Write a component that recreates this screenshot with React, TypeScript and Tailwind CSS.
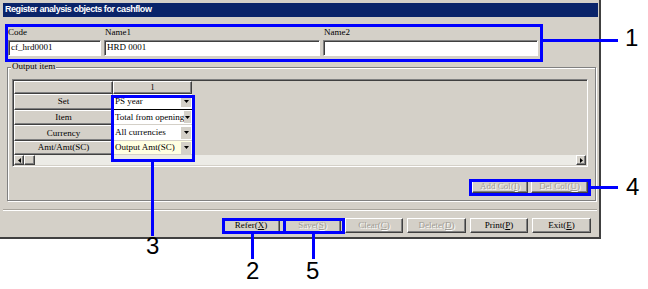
import React from 'react';

const raised =
  'border border-t-white border-l-white border-r-[#404040] border-b-[#404040] shadow-[inset_-1px_-1px_#808080]';
const sunken =
  'border border-t-[#808080] border-l-[#808080] border-r-white border-b-white shadow-[inset_1px_1px_#404040]';
const serif = "font-['Liberation_Serif','Times_New_Roman',serif]";

function Mnemonic({ label, keyChar }: { label: string; keyChar: string }) {
  return (
    <>
      {label}(<span className="underline">{keyChar}</span>)
    </>
  );
}

function WinButton({
  label,
  keyChar,
  disabled,
  className = '',
}: {
  label: string;
  keyChar: string;
  disabled?: boolean;
  className?: string;
}) {
  return (
    <div
      className={`${raised} ${serif} flex items-center justify-center bg-[#d4d0c8] text-[9px] leading-none ${
        disabled ? 'text-[#a09c94] [text-shadow:1px_1px_#ffffff]' : 'text-black'
      } ${className}`}
    >
      <Mnemonic label={label} keyChar={keyChar} />
    </div>
  );
}

function DropArrow() {
  return (
    <div className="flex h-[12px] w-[10px] items-center justify-center bg-[#d4d0c8]">
      <svg width="5" height="3" viewBox="0 0 5 3">
        <path d="M0 0h5L2.5 3z" fill="#000" />
      </svg>
    </div>
  );
}

const rows = [
  { label: 'Set', value: 'PS year', bg: 'bg-white', h: 'h-[16px]', focus: true },
  { label: 'Item', value: 'Total from opening', bg: 'bg-white', h: 'h-[16px]' },
  { label: 'Currency', value: 'All currencies', bg: 'bg-white', h: 'h-[16px]' },
  { label: 'Amt/Amt(SC)', value: 'Output Amt(SC)', bg: 'bg-[#ffffe1]', h: 'h-[14px]' },
];

function OutputGrid() {
  return (
    <div className={`${sunken} flex h-[88px] flex-col bg-[#d4d0c8] p-px`}>
      <div className="flex h-[13px]">
        <div className={`${raised} w-[99px]`} />
        <div className={`${raised} ${serif} flex w-[79px] items-center justify-center text-[8px]`}>1</div>
      </div>
      {rows.map((r) => (
        <div key={r.label} className={`flex ${r.h}`}>
          <div
            className={`${raised} ${serif} flex w-[99px] items-center justify-center text-[9px] text-black`}
          >
            {r.label}
          </div>
          <div
            className={`flex w-[79px] items-center justify-between pl-[2px] pr-px ${r.bg} ${
              r.focus ? 'border-b border-black' : 'border-b border-[#d4d0c8]'
            }`}
          >
            <span className={`${serif} whitespace-nowrap text-[9px] leading-none text-black`}>{r.value}</span>
            <DropArrow />
          </div>
        </div>
      ))}
      <div className="mt-auto flex h-[10px] bg-[#ecebe6]">
        <div className={`${raised} flex w-[10px] items-center justify-center bg-[#d4d0c8]`}>
          <svg width="3" height="5" viewBox="0 0 3 5">
            <path d="M3 0v5L0 2.5z" fill="#000" />
          </svg>
        </div>
        <div className={`${raised} w-[11px] bg-[#d4d0c8]`} />
        <div className="flex-1" />
        <div className={`${raised} flex w-[10px] items-center justify-center bg-[#d4d0c8]`}>
          <svg width="3" height="5" viewBox="0 0 3 5">
            <path d="M0 0v5L3 2.5z" fill="#000" />
          </svg>
        </div>
      </div>
    </div>
  );
}

function Callout({ n, className }: { n: string; className: string }) {
  return (
    <span
      className={`absolute font-['Liberation_Sans',Arial,sans-serif] text-[24px] leading-none text-black ${className}`}
    >
      {n}
    </span>
  );
}

export default function App() {
  return (
    <div className="relative h-[289px] w-[648px] overflow-hidden bg-white">
      {/* dialog window */}
      <div className="flex h-[239px] w-[601px] flex-col border-b-2 border-r-2 border-b-[#404040] border-r-[#404040] bg-[#d4d0c8] pl-[3px] pr-px pt-[3px]">
        <div className="flex h-[14px] items-center bg-[#0a246a] pl-[2px]">
          <span className="font-['Liberation_Sans',Arial,sans-serif] text-[9px] font-bold tracking-[-0.45px] text-white">
            Register analysis objects for cashflow
          </span>
        </div>

        <div className={`${serif} flex gap-[3px] pl-[5px] pt-[9px] text-[9px] text-black`}>
          <div className="flex w-[93px] flex-col">
            <span className="h-[12px] leading-[12px]">Code</span>
            <div className={`${sunken} mt-[2px] flex h-[16px] items-center bg-white pl-[2px]`}>cf_hrd0001</div>
          </div>
          <div className="flex w-[216px] flex-col">
            <span className="h-[12px] pl-px leading-[12px]">Name1</span>
            <div className={`${sunken} mt-[2px] flex h-[16px] items-center bg-white pl-[2px]`}>HRD 0001</div>
          </div>
          <div className="flex w-[215px] flex-col">
            <span className="h-[12px] pl-px leading-[12px]">Name2</span>
            <div className={`${sunken} mt-[2px] h-[16px] bg-white`} />
          </div>
        </div>

        {/* Output item group */}
        <div className="relative ml-[4px] mr-[2px] mt-[11px] flex h-[134px] flex-col border border-[#808080] pl-[4px] pr-[7px] pt-[11px] shadow-[inset_1px_1px_#ffffff,1px_1px_#ffffff]">
          <span className={`${serif} absolute left-[3px] top-[-6px] bg-[#d4d0c8] px-px text-[9px] leading-none text-black`}>
            Output item
          </span>
          <OutputGrid />
          <div className="mt-[13px] flex justify-end gap-[3px]">
            <WinButton label="Add Col" keyChar="I" disabled className="h-[13px] w-[56px]" />
            <WinButton label="Del Col" keyChar="U" disabled className="h-[13px] w-[57px]" />
          </div>
        </div>

        <div className="mr-px mt-[8px] border-t border-b border-t-[#a8a49c] border-b-white" />

        <div className="mr-[7px] mt-[7px] flex justify-end gap-[4px]">
          <WinButton label="Refer" keyChar="X" className="h-[15px] w-[58px]" />
          <WinButton label="Save" keyChar="S" disabled className="h-[15px] w-[57px]" />
          <WinButton label="Clear" keyChar="C" disabled className="h-[15px] w-[58px]" />
          <WinButton label="Delete" keyChar="D" disabled className="h-[15px] w-[59px]" />
          <WinButton label="Print" keyChar="P" className="h-[15px] w-[58px]" />
          <WinButton label="Exit" keyChar="E" className="h-[15px] w-[59px]" />
        </div>
      </div>

      {/* annotations */}
      <div className="absolute left-[5px] top-[24px] h-[38px] w-[538px] border-[3px] border-[#0000ff]" />
      <div className="absolute left-[543px] top-[39px] h-[3px] w-[75px] bg-[#0000ff]" />
      <Callout n="1" className="left-[625px] top-[26px]" />

      <div className="absolute left-[111px] top-[95px] h-[67px] w-[84px] border-[3px] border-[#0000ff]" />
      <div className="absolute left-[151px] top-[162px] h-[74px] w-[3px] bg-[#0000ff]" />
      <Callout n="3" className="left-[146px] top-[234px]" />

      <div className="absolute left-[469px] top-[179px] h-[17px] w-[122px] border-[3px] border-[#0000ff]" />
      <div className="absolute left-[591px] top-[186px] h-[3px] w-[27px] bg-[#0000ff]" />
      <Callout n="4" className="left-[626px] top-[175px]" />

      <div className="absolute left-[222px] top-[218px] h-[16px] w-[64px] border-[3px] border-[#0000ff]" />
      <div className="absolute left-[283px] top-[218px] h-[16px] w-[62px] border-[3px] border-[#0000ff]" />
      <div className="absolute left-[251px] top-[234px] h-[25px] w-[3px] bg-[#0000ff]" />
      <div className="absolute left-[312px] top-[234px] h-[25px] w-[3px] bg-[#0000ff]" />
      <Callout n="2" className="left-[246px] top-[259px]" />
      <Callout n="5" className="left-[306px] top-[259px]" />
    </div>
  );
}
